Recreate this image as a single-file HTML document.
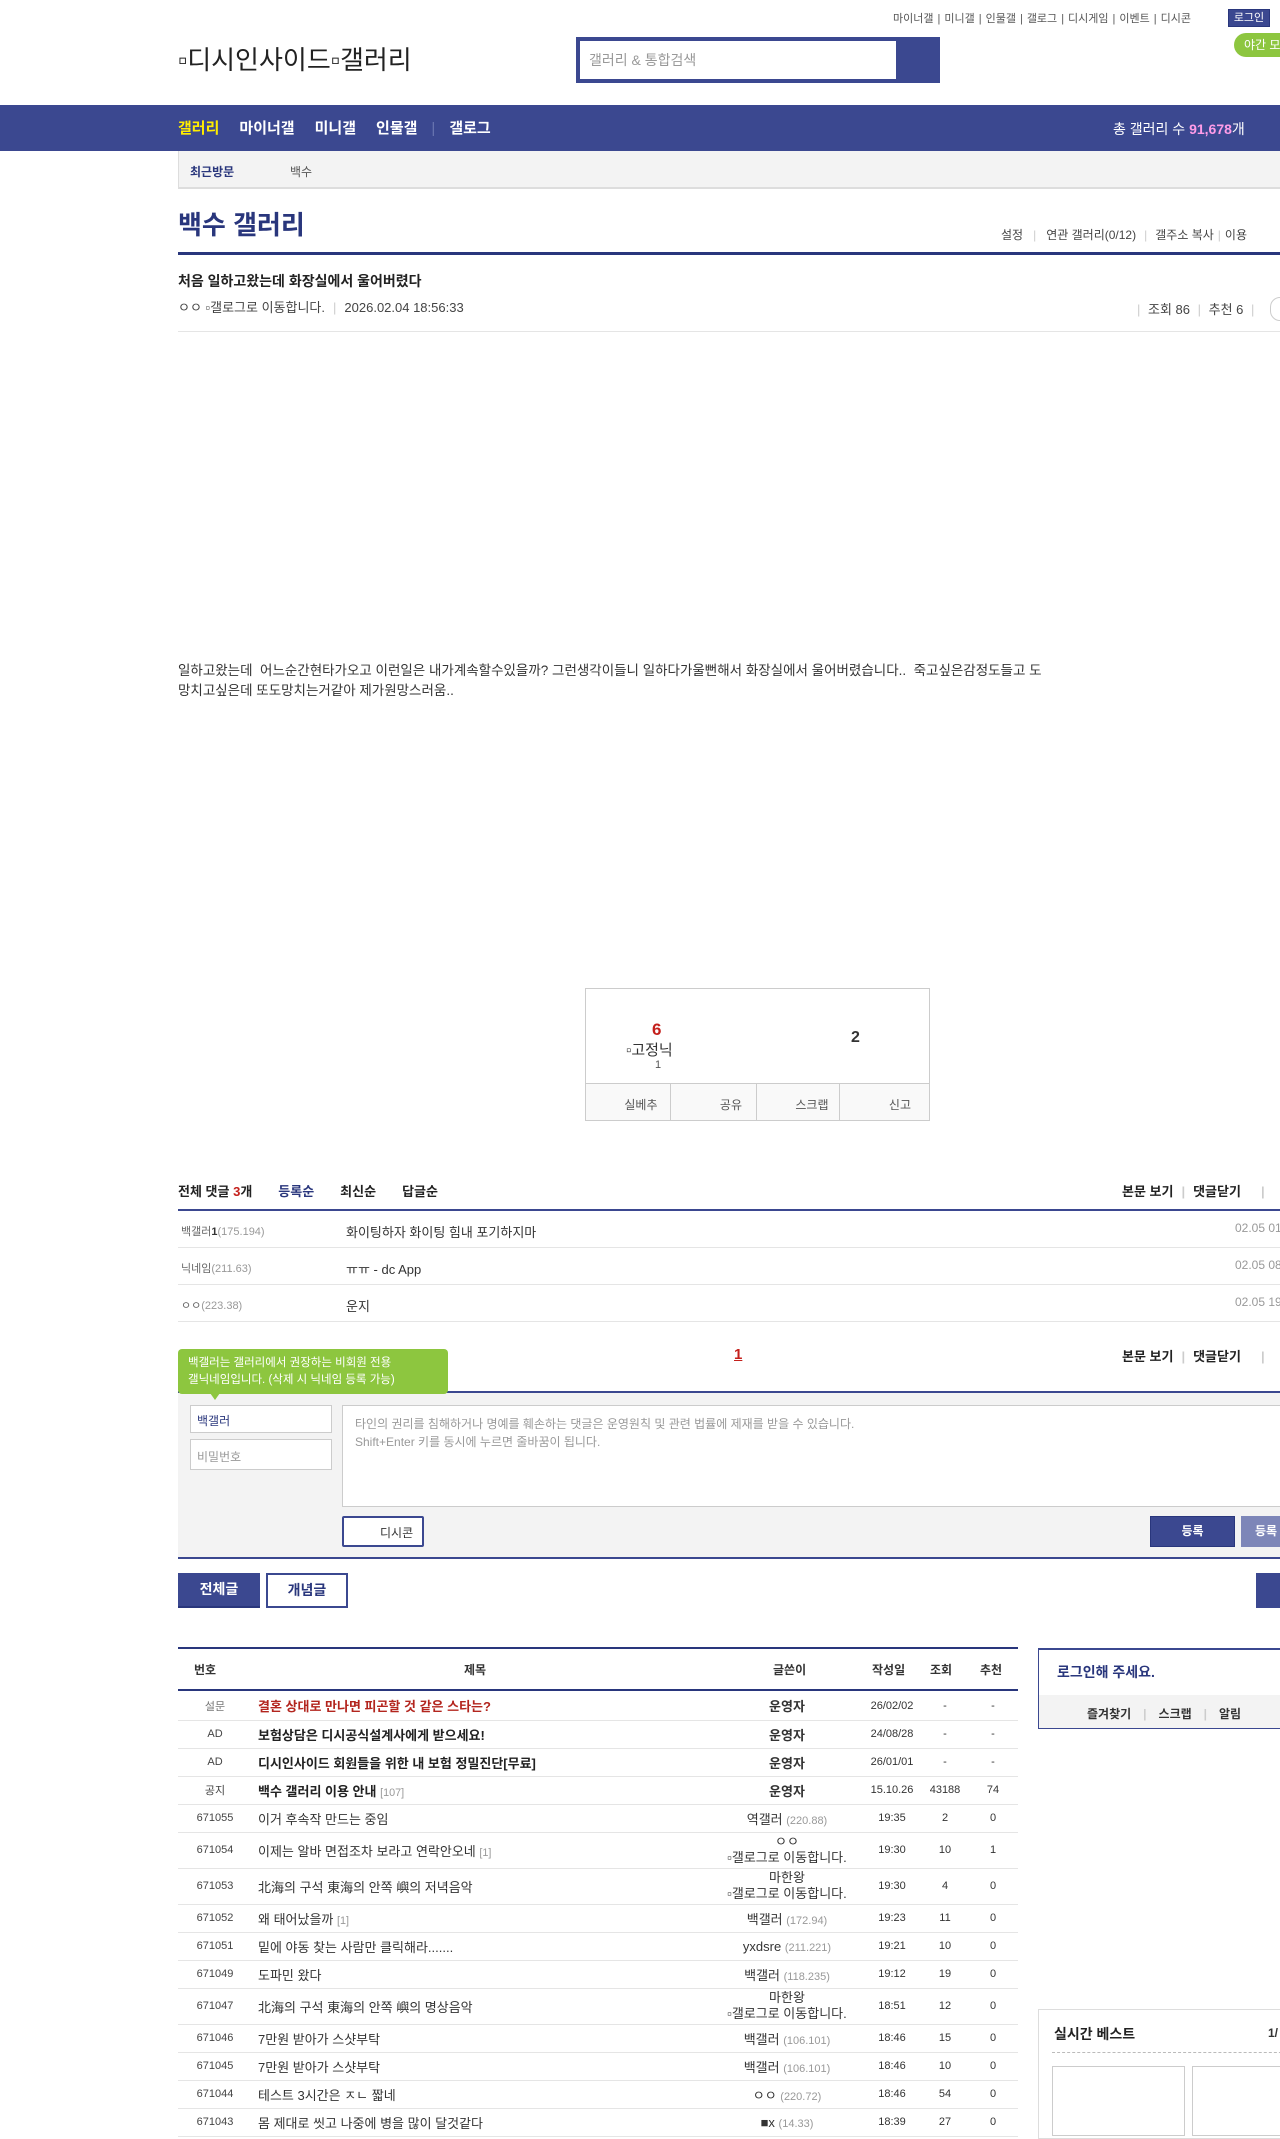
<!DOCTYPE html>
<html><head><meta charset="utf-8">
<style>
*{margin:0;padding:0;box-sizing:border-box}
body{width:1280px;height:2129px;overflow:hidden;position:relative;background:#fff;font-family:"Liberation Sans","Noto Sans CJK KR",sans-serif;color:#333;font-size:13px}
.a{position:absolute;white-space:nowrap}
.navy{color:#29367c}
.topl span{color:#555;font-size:11px}
.sep{color:#ccc;margin:0 4px}
table{border-collapse:collapse}
.lst td{font-size:13px;color:#333;border-bottom:1px solid #e5e5e5;text-align:center;padding:0}
.lst td.t{text-align:left;padding-left:6px}
.lst td.n{font-size:11px;color:#444}
.lst td.w small{color:#999;font-size:11px}
.lst td.d{font-size:11px}
</style></head><body>
<div class="a topl" style="left:893px;top:10px"><span>마이너갤</span><span class="sep">|</span><span>미니갤</span><span class="sep">|</span><span>인물갤</span><span class="sep">|</span><span>갤로그</span><span class="sep">|</span><span>디시게임</span><span class="sep">|</span><span>이벤트</span><span class="sep">|</span><span>디시콘</span></div>
<div class="a" style="left:1228px;top:9px;width:42px;height:18px;background:#3b4890;border:1px solid #29367c;color:#fff;font-size:11px;text-align:center;line-height:16px">로그인</div>
<div class="a" style="left:1234px;top:33px;width:60px;height:24px;background:#8dc63f;border-radius:12px;color:#fff;font-size:12px;line-height:24px;padding-left:10px">야간 모드</div>
<div class="a" style="left:178px;top:40px;font-size:26px;color:#222">▫디시인사이드▫갤러리</div>
<div class="a" style="left:576px;top:37px;width:364px;height:46px;background:#3b4890"></div>
<div class="a" style="left:580px;top:41px;width:316px;height:38px;background:#fff;color:#999;font-size:14px;line-height:38px;padding-left:9px">갤러리 &amp; 통합검색</div>
<div class="a" style="left:0;top:105px;width:1280px;height:46px;background:#3b4890"></div>
<div class="a" style="left:178px;top:118px;font-size:15px;font-weight:bold;color:#fff;line-height:22px"><span style="color:#ffed00">갤러리</span><span style="margin-left:20px">마이너갤</span><span style="margin-left:20px">미니갤</span><span style="margin-left:20px">인물갤</span><span style="color:#6a75b0;margin:0 14px;font-weight:normal">|</span><span>갤로그</span></div>
<div class="a" style="left:1113px;top:119px;font-size:14px;color:#fff">총 갤러리 수 <b style="color:#ff9ce8">91,678</b>개</div>
<div class="a" style="left:178px;top:151px;width:1102px;height:38px;background:#f3f3f3;border-left:1px solid #ddd;border-bottom:2px solid #ddd"></div>
<div class="a navy" style="left:190px;top:163px;font-size:12px;font-weight:bold">최근방문</div>
<div class="a" style="left:290px;top:163px;font-size:12px;color:#555">백수</div>
<div class="a navy" style="left:178px;top:205px;font-size:26px;font-weight:bold">백수 갤러리</div>
<div class="a" style="left:1001px;top:226px;font-size:12px;color:#444">설정<span class="sep" style="margin:0 10px">|</span>연관 갤러리(0/12)<span class="sep" style="margin:0 8px">|</span>갤주소 복사<span class="sep">|</span>이용</div>
<div class="a" style="left:178px;top:252px;width:1102px;height:3px;background:#29367c"></div>
<div class="a" style="left:178px;top:271px;font-size:14px;font-weight:bold;color:#222">처음 일하고왔는데 화장실에서 울어버렸다</div>
<div class="a" style="left:178px;top:297px;font-size:13px;color:#444">ㅇㅇ ▫갤로그로 이동합니다.<span class="sep" style="margin:0 8px">|</span>2026.02.04 18:56:33</div>
<div class="a" style="left:1133px;top:299px;font-size:13px;color:#444"><span class="sep">|</span> 조회 86 <span class="sep">|</span> 추천 6 <span class="sep">|</span></div>
<div class="a" style="left:1270px;top:297px;width:20px;height:24px;border:1px solid #ccc;border-radius:12px"></div>
<div class="a" style="left:178px;top:331px;width:1102px;height:1px;background:#e5e5e5"></div>
<div class="a" style="left:178px;top:661px;font-size:13.5px;line-height:20px;color:#333;white-space:normal;width:872px">일하고왔는데&nbsp; 어느순간현타가오고 이런일은 내가계속할수있을까? 그런생각이들니 일하다가울뻔해서 화장실에서 울어버렸습니다..&nbsp; 죽고싶은감정도들고 도망치고싶은데 또도망치는거같아 제가원망스러움..</div>
<div class="a" style="left:585px;top:988px;width:345px;height:133px;border:1px solid #ccc"></div>
<div class="a" style="left:652px;top:1020px;font-size:17px;font-weight:bold;color:#c4201c">6</div>
<div class="a" style="left:626px;top:1039px;font-size:15px;color:#333">▫고정닉</div>
<div class="a" style="left:655px;top:1059px;font-size:11px;color:#555">1</div>
<div class="a" style="left:851px;top:1029px;font-size:16px;font-weight:bold;color:#333">2</div>
<div class="a" style="left:586px;top:1083px;width:343px;height:37px;border-top:1px solid #ccc;background:#f9f9f9;display:flex;font-size:12px;color:#555">
<div style="flex:1;border-right:1px solid #ccc;text-align:right;padding:12px 12px 0 0">실베추</div><div style="flex:1;border-right:1px solid #ccc;text-align:right;padding:12px 14px 0 0">공유</div><div style="flex:1;border-right:1px solid #ccc;text-align:right;padding:12px 10px 0 0">스크랩</div><div style="flex:1;text-align:right;padding:12px 18px 0 0">신고</div></div>
<div class="a" style="left:178px;top:1181px;font-size:13px;font-weight:bold;color:#222">전체 댓글 <span style="color:#c4201c">3</span>개<span class="navy" style="margin-left:26px">등록순</span><span style="margin-left:26px">최신순</span><span style="margin-left:26px">답글순</span></div>
<div class="a" style="left:1122px;top:1181px;font-size:13px;font-weight:bold;color:#222">본문 보기<span class="sep" style="margin:0 8px">|</span>댓글닫기<span class="sep" style="margin:0 20px">|</span></div>
<div class="a" style="left:178px;top:1209px;width:1102px;height:2px;background:#3b4890"></div>
<div class="a" style="left:178px;top:1211px;width:1102px;font-size:13px">
<div style="height:37px;border-bottom:1px solid #e5e5e5;position:relative"><span class="a" style="left:3px;top:12px;font-size:11px;color:#666">백갤러<b style="color:#333">1</b><span style="color:#999">(175.194)</span></span><span class="a" style="left:168px;top:11px">화이팅하자 화이팅 힘내 포기하지마</span><span class="a" style="left:1057px;top:10px;font-size:12px;color:#999">02.05 01</span></div>
<div style="height:37px;border-bottom:1px solid #e5e5e5;position:relative"><span class="a" style="left:3px;top:12px;font-size:11px;color:#666">닉네임<span style="color:#999">(211.63)</span></span><span class="a" style="left:168px;top:11px">ㅠㅠ - dc App</span><span class="a" style="left:1057px;top:10px;font-size:12px;color:#999">02.05 08</span></div>
<div style="height:37px;border-bottom:1px solid #e5e5e5;position:relative"><span class="a" style="left:3px;top:12px;font-size:11px;color:#666">ㅇㅇ<span style="color:#999">(223.38)</span></span><span class="a" style="left:168px;top:11px">운지</span><span class="a" style="left:1057px;top:10px;font-size:12px;color:#999">02.05 19</span></div>
</div>
<div class="a" style="left:734px;top:1346px;font-size:15px;font-weight:bold;color:#c4201c;text-decoration:underline">1</div>
<div class="a" style="left:1122px;top:1346px;font-size:13px;font-weight:bold;color:#222">본문 보기<span class="sep" style="margin:0 8px">|</span>댓글닫기<span class="sep" style="margin:0 20px">|</span></div>
<div class="a" style="left:178px;top:1391px;width:1102px;height:2px;background:#3b4890"></div>
<div class="a" style="left:178px;top:1393px;width:1102px;height:166px;background:#f3f3f3;border-bottom:2px solid #3b4890"></div>
<div class="a" style="left:178px;top:1349px;width:270px;height:45px;background:#8dc63f;border-radius:4px;color:#fff;font-size:11.5px;line-height:17px;padding:6px 0 0 10px;white-space:normal">백갤러는 갤러리에서 권장하는 비회원 전용<br>갤닉네임입니다. (삭제 시 닉네임 등록 가능)</div>
<div class="a" style="left:210px;top:1393px;width:0;height:0;border-left:5px solid transparent;border-right:5px solid transparent;border-top:7px solid #8dc63f"></div>
<div class="a" style="left:190px;top:1405px;width:142px;height:28px;background:#fff;border:1px solid #ccc;font-size:12px;color:#29367c;padding:6px 0 0 6px">백갤러</div>
<div class="a" style="left:190px;top:1439px;width:142px;height:31px;background:#fff;border:1px solid #ccc;font-size:12px;color:#999;padding:8px 0 0 6px">비밀번호</div>
<div class="a" style="left:342px;top:1405px;width:940px;height:102px;background:#fff;border:1px solid #ccc;font-size:12px;color:#999;line-height:18px;padding:9px 0 0 12px;white-space:normal">타인의 권리를 침해하거나 명예를 훼손하는 댓글은 운영원칙 및 관련 법률에 제재를 받을 수 있습니다.<br>Shift+Enter 키를 동시에 누르면 줄바꿈이 됩니다.</div>
<div class="a" style="left:342px;top:1516px;width:82px;height:31px;background:#fff;border:2px solid #3b4890;border-radius:2px;font-size:12px;color:#333;padding:6px 0 0 36px">디시콘</div>
<div class="a" style="left:1150px;top:1516px;width:85px;height:31px;background:#3b4890;border:1px solid #29367c;color:#fff;font-size:12px;font-weight:bold;text-align:center;line-height:29px">등록</div>
<div class="a" style="left:1241px;top:1516px;width:60px;height:31px;background:#7d86b8;color:#fff;font-size:12px;font-weight:bold;line-height:31px;padding-left:14px">등록</div>
<div class="a" style="left:178px;top:1573px;width:82px;height:35px;background:#3b4890;border-bottom:2px solid #29367c;color:#fff;font-size:14px;font-weight:bold;text-align:center;line-height:33px">전체글</div>
<div class="a" style="left:266px;top:1573px;width:82px;height:35px;background:#fff;border:2px solid #3b4890;color:#29367c;font-size:14px;font-weight:bold;text-align:center;line-height:30px">개념글</div>
<div class="a" style="left:1256px;top:1573px;width:40px;height:35px;background:#3b4890"></div>
<div class="a" style="left:178px;top:1647px;width:840px;height:2px;background:#29367c"></div>
<div class="a" style="left:178px;top:1649px;width:840px;height:42px;border-bottom:2px solid #29367c;font-size:12px;font-weight:bold;color:#333">
<span class="a" style="left:16px;top:12px">번호</span><span class="a" style="left:286px;top:12px">제목</span><span class="a" style="left:595px;top:12px">글쓴이</span><span class="a" style="left:694px;top:12px">작성일</span><span class="a" style="left:752px;top:12px">조회</span><span class="a" style="left:802px;top:12px">추천</span></div>
<table class="a lst" style="left:178px;top:1692px;width:840px">
<colgroup><col style="width:74px"><col style="width:460px"><col style="width:150px"><col style="width:60px"><col style="width:46px"><col style="width:50px"></colgroup>
<tr style="height:28px"><td class="n" style="color:#777">설문</td><td class="t" style="color:#b3251e;font-weight:bold">결혼 상대로 만나면 피곤할 것 같은 스타는?</td><td class="w"><b>운영자</b></td><td class="d">26/02/02</td><td class="d">-</td><td class="d">-</td></tr>
<tr style="height:28px"><td class="n">AD</td><td class="t" style="font-weight:bold;color:#222">보험상담은 디시공식설계사에게 받으세요!</td><td class="w"><b>운영자</b></td><td class="d">24/08/28</td><td class="d">-</td><td class="d">-</td></tr>
<tr style="height:28px"><td class="n">AD</td><td class="t" style="font-weight:bold;color:#222">디시인사이드 회원들을 위한 내 보험 정밀진단[무료]</td><td class="w"><b>운영자</b></td><td class="d">26/01/01</td><td class="d">-</td><td class="d">-</td></tr>
<tr style="height:28px"><td class="n">공지</td><td class="t" style="font-weight:bold;color:#222">백수 갤러리 이용 안내 <small style="color:#999;font-weight:normal">[107]</small></td><td class="w"><b>운영자</b></td><td class="d">15.10.26</td><td class="d">43188</td><td class="d">74</td></tr>
<tr style="height:28px"><td class="n">671055</td><td class="t">이거 후속작 만드는 중임</td><td class="w">역갤러 <small>(220.88)</small></td><td class="d">19:35</td><td class="d">2</td><td class="d">0</td></tr>
<tr style="height:36px"><td class="n">671054</td><td class="t">이제는 알바 면접조차 보라고 연락안오네 <small style="color:#999">[1]</small></td><td class="w" style="line-height:16px">ㅇㅇ<br>▫갤로그로 이동합니다.</td><td class="d">19:30</td><td class="d">10</td><td class="d">1</td></tr>
<tr style="height:36px"><td class="n">671053</td><td class="t">北海의 구석 東海의 안쪽 嶼의 저녁음악</td><td class="w" style="line-height:16px">마한왕<br>▫갤로그로 이동합니다.</td><td class="d">19:30</td><td class="d">4</td><td class="d">0</td></tr>
<tr style="height:28px"><td class="n">671052</td><td class="t">왜 태어났을까 <small style="color:#999">[1]</small></td><td class="w">백갤러 <small>(172.94)</small></td><td class="d">19:23</td><td class="d">11</td><td class="d">0</td></tr>
<tr style="height:28px"><td class="n">671051</td><td class="t">밑에 야동 찾는 사람만 클릭해라.......</td><td class="w">yxdsre <small>(211.221)</small></td><td class="d">19:21</td><td class="d">10</td><td class="d">0</td></tr>
<tr style="height:28px"><td class="n">671049</td><td class="t">도파민 왔다</td><td class="w">백갤러 <small>(118.235)</small></td><td class="d">19:12</td><td class="d">19</td><td class="d">0</td></tr>
<tr style="height:36px"><td class="n">671047</td><td class="t">北海의 구석 東海의 안쪽 嶼의 명상음악</td><td class="w" style="line-height:16px">마한왕<br>▫갤로그로 이동합니다.</td><td class="d">18:51</td><td class="d">12</td><td class="d">0</td></tr>
<tr style="height:28px"><td class="n">671046</td><td class="t">7만원 받아가 스샷부탁</td><td class="w">백갤러 <small>(106.101)</small></td><td class="d">18:46</td><td class="d">15</td><td class="d">0</td></tr>
<tr style="height:28px"><td class="n">671045</td><td class="t">7만원 받아가 스샷부탁</td><td class="w">백갤러 <small>(106.101)</small></td><td class="d">18:46</td><td class="d">10</td><td class="d">0</td></tr>
<tr style="height:28px"><td class="n">671044</td><td class="t">테스트 3시간은 ㅈㄴ 짧네</td><td class="w">ㅇㅇ <small>(220.72)</small></td><td class="d">18:46</td><td class="d">54</td><td class="d">0</td></tr>
<tr style="height:28px"><td class="n">671043</td><td class="t">몸 제대로 씻고 나중에 병을 많이 달것같다</td><td class="w">■x <small>(14.33)</small></td><td class="d">18:39</td><td class="d">27</td><td class="d">0</td></tr>
</table>
<div class="a" style="left:1038px;top:1648px;width:260px;height:81px;border:1px solid #3b4890;border-top:2px solid #3b4890"></div>
<div class="a navy" style="left:1057px;top:1662px;font-size:14px;font-weight:bold">로그인해 주세요.</div>
<div class="a" style="left:1039px;top:1695px;width:250px;height:33px;background:#f3f3f3"></div>
<div class="a" style="left:1087px;top:1705px;font-size:12px;font-weight:bold;color:#333">즐겨찾기<span class="sep" style="margin:0 12px">|</span>스크랩<span class="sep" style="margin:0 12px">|</span>알림</div>
<div class="a" style="left:1038px;top:2009px;width:260px;height:130px;border:1px solid #ddd"></div>
<div class="a" style="left:1054px;top:2024px;font-size:14px;font-weight:bold;color:#222">실시간 베스트</div>
<div class="a" style="left:1268px;top:2026px;font-size:12px;font-weight:bold;color:#333">1/</div>
<div class="a" style="left:1052px;top:2052px;width:240px;border-top:1px dashed #bbb"></div>
<div class="a" style="left:1052px;top:2066px;width:133px;height:70px;border:1px solid #ccc"></div>
<div class="a" style="left:1192px;top:2066px;width:100px;height:70px;border:1px solid #ccc"></div>
</body></html>
